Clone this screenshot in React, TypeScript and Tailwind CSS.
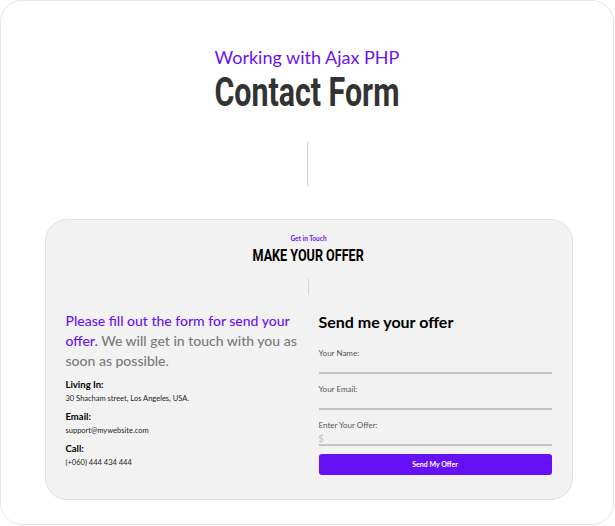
import React from 'react';

const jost = { fontFamily: 'Lato, "Noto Sans", sans-serif' };
const oswald = { fontFamily: 'Roboto, "DejaVu Sans", sans-serif' };

const Field = ({ label, placeholder }: { label: string; placeholder?: string }) => (
  <div className="flex flex-col">
    <label className="text-[8px] leading-[10px] text-[#555]">{label}</label>
    <div className="h-[14px] flex items-end text-[9px] leading-[10px] text-[#bbb]">{placeholder}</div>
    <div className="h-[2px] bg-[#c4c4c4]" />
  </div>
);

const InfoItem = ({ title, value }: { title: string; value: string }) => (
  <div className="flex flex-col gap-[3px]">
    <span className="text-[9.5px] leading-[12px] font-bold text-black">{title}</span>
    <span className="text-[7.5px] leading-[10px] text-[#222]">{value}</span>
  </div>
);

export default function App() {
  return (
    <div className="w-[615px] h-[526px] bg-white" style={jost}>
      <div className="w-[614px] h-[525px] border border-[#e6e6e6] rounded-[22px] flex flex-col items-center">
        <p className="mt-[45px] text-[18px] leading-[22px] text-[#6a12f2]">Working with Ajax PHP</p>
        <h1 className="mt-[2px] text-[41px] leading-[44px] font-bold text-[#333] scale-x-[0.74]" style={oswald}>
          Contact Form
        </h1>
        <div className="mt-[28px] w-px h-[44px] bg-[#cfcfcf]" />

        <div className="mt-[33px] ml-[3px] w-[528px] h-[281px] bg-[#f2f2f2] border border-[#e2e2e2] rounded-[22px] flex flex-col items-center">
          <p className="mt-[15px] text-[6.5px] leading-[8px] font-bold text-[#6a12f2]">Get in Touch</p>
          <h2 className="mt-[3px] text-[17px] leading-[18px] font-bold text-black scale-x-[0.74]" style={oswald}>
            MAKE YOUR OFFER
          </h2>
          <div className="mt-[15px] w-px h-[16px] bg-[#d6d6d6]" />

          <div className="mt-[16px] w-full flex px-[20px] gap-[20px]">
            <div className="w-[234px] flex flex-col">
              <p className="text-[14px] leading-[20px] font-medium text-[#7a7a7a]">
                <span className="text-[#6a12f2]">Please fill out the form for send your offer.</span> We will get in
                touch with you as soon as possible.
              </p>
              <div className="mt-[8px] flex flex-col gap-[7px]">
                <InfoItem title="Living In:" value="30 Shacham street, Los Angeles, USA." />
                <InfoItem title="Email:" value="support@mywebsite.com" />
                <InfoItem title="Call:" value="(+060) 444 434 444" />
              </div>
            </div>

            <div className="w-[234px] flex flex-col">
              <h3 className="text-[16px] leading-[22px] font-bold text-black">Send me your offer</h3>
              <div className="mt-[15px] flex flex-col gap-[10px]">
                <Field label="Your Name:" />
                <Field label="Your Email:" />
                <Field label="Enter Your Offer:" placeholder="$" />
              </div>
              <button className="mt-[8px] h-[21px] w-full bg-[#6610f5] rounded-[3px] text-white text-[7px] font-bold">
                Send My Offer
              </button>
            </div>
          </div>
        </div>
      </div>
    </div>
  );
}
